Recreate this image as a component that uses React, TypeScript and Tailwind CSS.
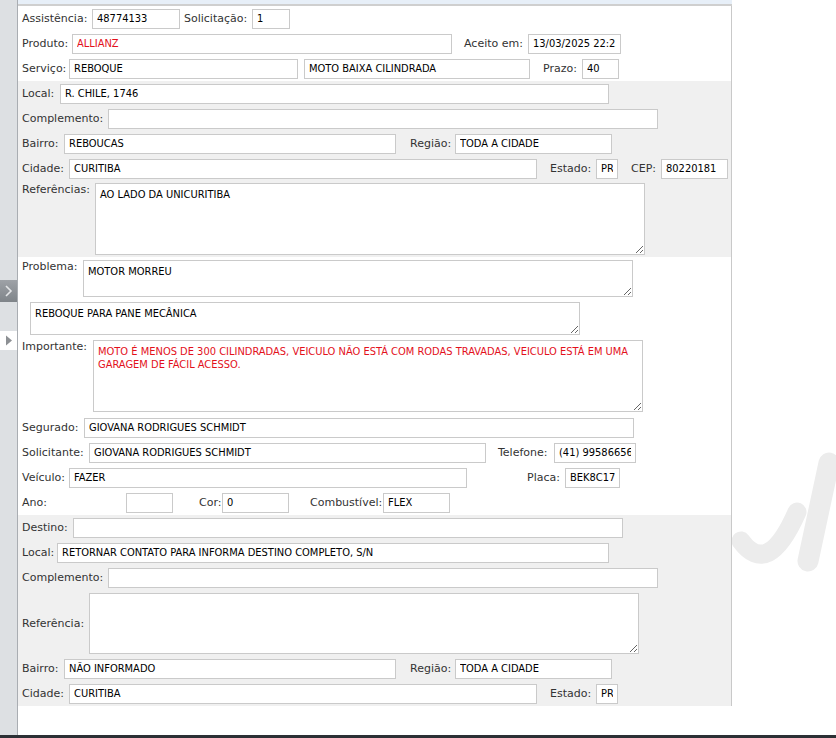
import React from 'react';

const labelFont = { fontFamily: '"DejaVu Sans", Verdana, sans-serif' };
const valueFont = { fontFamily: '"DejaVu Sans Condensed", "DejaVu Sans", Tahoma, sans-serif' };

function Label({ w, ml = 0, children }: { w: number; ml?: number; children?: React.ReactNode }) {
  return (
    <span
      className="block shrink-0 whitespace-nowrap text-[11px] leading-[13px] text-[#333]"
      style={{ ...labelFont, width: w, marginLeft: ml }}
    >
      {children}
    </span>
  );
}

function Field({ w, ml = 0, value = '', red = false }: { w: number; ml?: number; value?: string; red?: boolean }) {
  return (
    <input
      readOnly
      value={value}
      className={`h-[20px] shrink-0 border border-[#cacaca] bg-white px-[4px] text-[11px] outline-none ${red ? 'text-[#e3101b]' : 'text-black'}`}
      style={{ ...valueFont, width: w, marginLeft: ml }}
    />
  );
}

function Area({ w, h, value = '', red = false }: { w: number; h: number; value?: string; red?: boolean }) {
  return (
    <textarea
      readOnly
      value={value}
      className={`shrink-0 border border-[#cacaca] bg-white px-[4px] pt-[4px] text-[11px] leading-[13px] outline-none ${red ? 'text-[#e3101b]' : 'text-black'}`}
      style={{ ...valueFont, width: w, height: h }}
    />
  );
}

function Row({ children }: { children: React.ReactNode }) {
  return <div className="flex h-[25px] items-center">{children}</div>;
}

export default function App() {
  return (
    <div className="relative flex h-[738px] w-[836px] flex-col overflow-hidden bg-white">
      <div className="flex h-[735px]">
        {/* left collapse strip */}
        <aside className="flex w-[18px] shrink-0 flex-col border-r border-[#a9adb2] bg-[#dde0e3]">
          <div className="h-[280px]" />
          <div className="flex h-[22px] items-center justify-center bg-gradient-to-b from-[#9ea2a7] to-[#7f8489]">
            <svg width="9" height="12" viewBox="0 0 9 12">
              <path d="M2 1 L7 6 L2 11" fill="none" stroke="#e4e6e8" strokeWidth="1.6" />
            </svg>
          </div>
          <div className="h-[29px]" />
          <div className="flex h-[19px] items-center justify-center bg-white">
            <svg width="8" height="11" viewBox="0 0 8 11">
              <path d="M1 0.5 L7 5.5 L1 10.5 Z" fill="#8d9094" />
            </svg>
          </div>
        </aside>

        <main className="flex w-[714px] shrink-0 flex-col">
          <div className="h-[4px] bg-[#e7eff8]" />
          <div className="h-[2px] bg-[#cfcfcf]" />
          <div className="flex h-[700px] flex-col border-r border-b border-[#c9c9c9]">
            <div className="pl-[4px]">
              <Row>
                <Label w={70}>Assistência:</Label>
                <Field w={88} value="48774133" />
                <Label w={68} ml={4}>Solicitação:</Label>
                <Field w={38} value="1" />
              </Row>
              <Row>
                <Label w={50}>Produto:</Label>
                <Field w={380} value="ALLIANZ" red />
                <Label w={64} ml={12}>Aceito em:</Label>
                <Field w={93} value="13/03/2025 22:23" />
              </Row>
              <Row>
                <Label w={47}>Serviço:</Label>
                <Field w={229} value="REBOQUE" />
                <Field w={226} ml={6} value="MOTO BAIXA CILINDRADA" />
                <Label w={39} ml={13}>Prazo:</Label>
                <Field w={37} value="40" />
              </Row>
            </div>

            {/* endereço de origem */}
            <div className="bg-[#f0f0f0] pl-[4px]">
              <Row>
                <Label w={38}>Local:</Label>
                <Field w={549} value="R. CHILE, 1746" />
              </Row>
              <Row>
                <Label w={86}>Complemento:</Label>
                <Field w={550} />
              </Row>
              <Row>
                <Label w={42}>Bairro:</Label>
                <Field w={332} value="REBOUCAS" />
                <Label w={45} ml={14}>Região:</Label>
                <Field w={157} value="TODA A CIDADE" />
              </Row>
              <Row>
                <Label w={47}>Cidade:</Label>
                <Field w={468} value="CURITIBA" />
                <Label w={46} ml={13}>Estado:</Label>
                <Field w={22} value="PR" />
                <Label w={30} ml={13}>CEP:</Label>
                <Field w={67} value="80220181" />
              </Row>
              <div className="flex h-[76px] items-start pt-[2px]">
                <Label w={73}>Referências:</Label>
                <Area w={550} h={72} value="AO LADO DA UNICURITIBA" />
              </div>
            </div>

            {/* problema */}
            <div className="pl-[4px]">
              <div className="flex items-start pt-[3px]">
                <Label w={61}>Problema:</Label>
                <Area w={550} h={37} value="MOTOR MORREU" />
              </div>
              <div className="flex pt-[5px] pl-[8px]">
                <Area w={550} h={33} value="REBOQUE PARA PANE MECÂNICA" />
              </div>
              <div className="flex items-start pt-[5px]">
                <Label w={71}>Importante:</Label>
                <Area
                  w={550}
                  h={72}
                  red
                  value="MOTO É MENOS DE 300 CILINDRADAS, VEICULO NÃO ESTÁ COM RODAS TRAVADAS, VEICULO ESTÁ EM UMA GARAGEM DE FÁCIL ACESSO."
                />
              </div>
              <div className="h-[3px]" />
              <Row>
                <Label w={62}>Segurado:</Label>
                <Field w={550} value="GIOVANA RODRIGUES SCHMIDT" />
              </Row>
              <Row>
                <Label w={67}>Solicitante:</Label>
                <Field w={397} value="GIOVANA RODRIGUES SCHMIDT" />
                <Label w={56} ml={12}>Telefone:</Label>
                <Field w={82} value="(41) 995866562" />
              </Row>
              <Row>
                <Label w={47}>Veículo:</Label>
                <Field w={398} value="FAZER" />
                <Label w={38} ml={60}>Placa:</Label>
                <Field w={55} value="BEK8C17" />
              </Row>
              <Row>
                <Label w={104}>Ano:</Label>
                <Field w={47} />
                <Label w={23} ml={26}>Cor:</Label>
                <Field w={67} value="0" />
                <Label w={73} ml={21}>Combustível:</Label>
                <Field w={67} value="FLEX" />
              </Row>
            </div>

            {/* destino */}
            <div className="flex-1 bg-[#f0f0f0] pl-[4px]">
              <Row>
                <Label w={51}>Destino:</Label>
                <Field w={550} />
              </Row>
              <Row>
                <Label w={35}>Local:</Label>
                <Field w={552} value="RETORNAR CONTATO PARA INFORMA DESTINO COMPLETO, S/N" />
              </Row>
              <Row>
                <Label w={86}>Complemento:</Label>
                <Field w={550} />
              </Row>
              <div className="flex h-[66px] items-center">
                <Label w={67}>Referência:</Label>
                <Area w={550} h={61} />
              </div>
              <Row>
                <Label w={42}>Bairro:</Label>
                <Field w={332} value="NÃO INFORMADO" />
                <Label w={45} ml={14}>Região:</Label>
                <Field w={157} value="TODA A CIDADE" />
              </Row>
              <Row>
                <Label w={47}>Cidade:</Label>
                <Field w={468} value="CURITIBA" />
                <Label w={46} ml={13}>Estado:</Label>
                <Field w={22} value="PR" />
              </Row>
            </div>
          </div>
        </main>

        {/* watermark */}
        <div className="relative flex-1">
          <svg className="absolute left-0 top-[440px]" width="104" height="140" viewBox="732 440 104 140">
            <path d="M741 541 Q 768 578 797 512" fill="none" stroke="#ececec" strokeWidth="19" strokeLinecap="round" />
            <path d="M808 561 L 829 463" fill="none" stroke="#ececec" strokeWidth="21" strokeLinecap="round" />
          </svg>
        </div>
      </div>
      <div className="h-[3px] bg-[#2c3035]" />
    </div>
  );
}
